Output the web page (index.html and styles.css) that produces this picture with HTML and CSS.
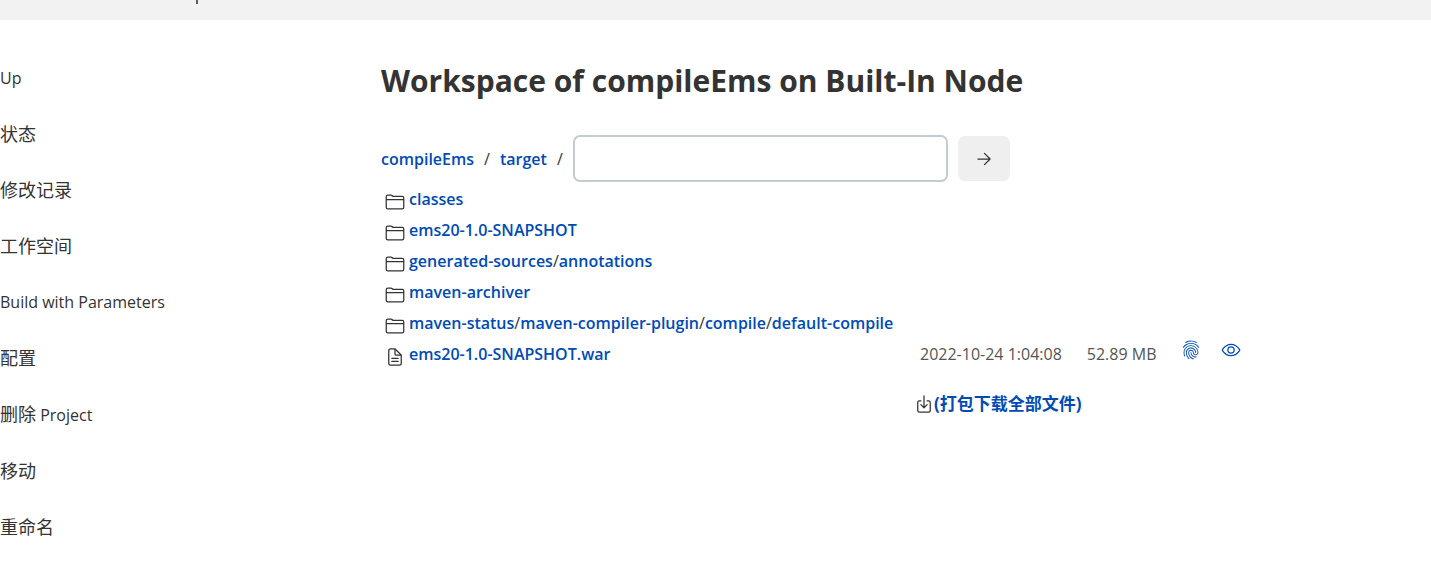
FILE: index.html
```
<!DOCTYPE html>
<html lang="zh-CN">
<head>
  <meta charset="UTF-8" />
  <title>compileEms - Workspace</title>
  <link rel="stylesheet" href="styles.css">
</head>
<body>

  <svg class="sprite" xmlns="http://www.w3.org/2000/svg">
    <symbol id="folder" viewBox="0 0 512 512">
      <path d="M440 432H72a40 40 0 01-40-40V120a40 40 0 0140-40h75.89a40 40 0 0122.19 6.72l27.84 18.56a40 40 0 0022.19 6.72H440a40 40 0 0140 40v240a40 40 0 01-40 40zM32 192h448"/>
    </symbol>
    <symbol id="document" viewBox="0 0 512 512">
      <path d="M416 221.25V416a48 48 0 01-48 48H144a48 48 0 01-48-48V96a48 48 0 0148-48h98.75a32 32 0 0122.62 9.37l141.26 141.26a32 32 0 019.37 22.62z"/>
      <path d="M256 56v120a32 32 0 0032 32h120M176 288h160M176 368h160"/>
    </symbol>
    <symbol id="arrow" viewBox="0 0 512 512">
      <path d="M268 112l144 144-144 144M392 256H100"/>
    </symbol>
    <symbol id="download" viewBox="0 0 512 512">
      <path d="M336 176h40a40 40 0 0140 40v208a40 40 0 01-40 40H136a40 40 0 01-40-40V216a40 40 0 0140-40h40"/>
      <path d="M176 272l80 80 80-80M256 48v288"/>
    </symbol>
    <symbol id="eye" viewBox="0 0 512 512">
      <path d="M255.66 112c-77.94 0-157.89 45.11-220.83 135.33a16 16 0 00-.27 17.77C82.92 340.8 161.8 400 255.66 400c92.84 0 173.34-59.38 221.79-135.25a16.14 16.14 0 000-17.47C428.89 172.28 347.8 112 255.66 112z"/>
      <circle cx="256" cy="256" r="80"/>
    </symbol>
    <symbol id="fingerprint" viewBox="0 0 512 512">
      <path fill="currentColor" stroke="none" d="M390.42 75.28a10.45 10.45 0 01-5.32-1.44C340.72 50.08 302.35 40 256.35 40c-45.77 0-89.23 11.28-128.76 33.84C122 77 115.11 74.8 111.87 69a12.4 12.4 0 014.63-16.32A281.81 281.81 0 01256.35 16c49.23 0 92.23 11.28 139.39 36.48a12 12 0 014.85 16.08 11.3 11.3 0 01-10.17 6.72zm-330.79 126a11.73 11.73 0 01-6.7-2.16 12.26 12.26 0 01-2.78-16.8c22.89-33.6 52-60 86.69-78.48 72.58-38.84 165.51-39.12 238.32-.24 34.68 18.48 63.8 44.64 86.69 78a12.29 12.29 0 01-2.78 16.8 11.26 11.26 0 01-16.18-2.88c-20.8-30.24-47.16-54-78.6-70.8-66.34-35.52-151.18-35.52-217.29.24-31.67 17-57.79 41-78.59 71.28a10.5 10.5 0 01-8.78 5.04zM204.1 491a10.66 10.66 0 01-8.09-3.6C175.9 466.48 165 453 149.55 424c-16-29.52-24.27-65.52-24.27-104.16 0-71.28 58.71-129.36 130.84-129.36S387 248.56 387 319.84a11.56 11.56 0 11-23.11 0c0-58.08-48.32-105.36-107.72-105.36S148.4 261.76 148.4 319.84c0 34.56 7.39 66.48 21.49 92.4 14.8 27.6 25 39.36 42.77 58.08a12.67 12.67 0 010 17 12.44 12.44 0 01-8.56 3.68zm165.75-44.4c-27.51 0-51.78-7.2-71.66-21.36a129.1 129.1 0 01-55-105.36 11.57 11.57 0 1123.12 0 104.28 104.28 0 0044.84 85.44c16.41 11.52 35.6 17 58.72 17a147.41 147.41 0 0024-2.4c6.24-1.2 12.25 3.12 13.4 9.84a11.92 11.92 0 01-9.47 13.92 152.28 152.28 0 01-27.95 2.88zM323.38 496a13 13 0 01-3-.48c-36.76-10.56-60.8-24.72-86-50.4-32.37-33.36-50.16-77.76-50.16-125.28 0-38.88 31.9-70.56 71.19-70.56s71.2 31.68 71.2 70.56c0 25.68 21.5 46.56 48.08 46.56s48.08-20.88 48.08-46.56c0-90.48-75.13-163.92-167.59-163.92-65.65 0-125.75 37.92-152.79 96.72-9 19.44-13.64 42.24-13.64 67.2 0 18.72 1.61 48.24 15.48 86.64 2.32 6.24-.69 13.2-6.7 15.36a11.34 11.34 0 01-14.79-7 276.39 276.39 0 01-16.88-95c0-28.8 5.32-55 15.72-77.76 30.75-67 98.94-110.4 173.6-110.4 105.18 0 190.71 84.24 190.71 187.92 0 38.88-31.9 70.56-71.2 70.56s-71.2-31.68-71.2-70.56c.01-25.68-21.49-46.6-48.07-46.6s-48.08 20.88-48.08 46.56c0 41 15.26 79.44 43.23 108.24 22 22.56 43 35 75.59 44.16 6.24 1.68 9.71 8.4 8.09 14.64a11.39 11.39 0 01-10.87 9.36z"/>
    </symbol>
  </svg>

  <header class="breadcrumb-bar"><span class="tick"></span></header>

  <div class="page">
    <nav class="tasks">
      <a href="#">Up</a>
      <a href="#" class="zh">状态</a>
      <a href="#" class="zh">修改记录</a>
      <a href="#" class="zh">工作空间</a>
      <a href="#">Build with Parameters</a>
      <a href="#" class="zh">配置</a>
      <a href="#"><span class="zh">删除</span> Project</a>
      <a href="#" class="zh">移动</a>
      <a href="#" class="zh">重命名</a>
    </nav>

    <main class="main">
      <h1>Workspace of compileEms on Built-In Node</h1>

      <form class="path-form">
        <a href="#">compileEms</a>
        <span>/</span>
        <a href="#">target</a>
        <span>/</span>
        <input type="text" class="path-input" aria-label="Path">
        <button type="button" class="go-btn" aria-label="Go"><svg class="icon"><use href="#arrow"/></svg></button>
      </form>

      <table class="files">
        <tr>
          <td class="type"><svg class="icon"><use href="#folder"/></svg></td>
          <td class="name"><a href="#">classes</a></td>
        </tr>
        <tr>
          <td class="type"><svg class="icon"><use href="#folder"/></svg></td>
          <td class="name"><a href="#">ems20-1.0-SNAPSHOT</a></td>
        </tr>
        <tr>
          <td class="type"><svg class="icon"><use href="#folder"/></svg></td>
          <td class="name"><a href="#">generated-sources</a>/<a href="#">annotations</a></td>
        </tr>
        <tr>
          <td class="type"><svg class="icon"><use href="#folder"/></svg></td>
          <td class="name"><a href="#">maven-archiver</a></td>
        </tr>
        <tr>
          <td class="type"><svg class="icon"><use href="#folder"/></svg></td>
          <td class="name"><a href="#">maven-status</a>/<a href="#">maven-compiler-plugin</a>/<a href="#">compile</a>/<a href="#">default-compile</a></td>
        </tr>
        <tr>
          <td class="type"><svg class="icon"><use href="#document"/></svg></td>
          <td class="name"><a href="#">ems20-1.0-SNAPSHOT.war</a></td>
          <td class="meta">2022-10-24 1:04:08</td>
          <td class="meta">52.89 MB</td>
          <td class="action"><a href="#" aria-label="Fingerprint"><svg class="icon"><use href="#fingerprint"/></svg></a></td>
          <td class="action"><a href="#" aria-label="View"><svg class="icon"><use href="#eye"/></svg></a></td>
        </tr>
        <tr class="zip-row">
          <td></td>
          <td></td>
          <td colspan="4"><div class="zip"><svg class="icon"><use href="#download"/></svg><a href="#">(打包下载全部文件)</a></div></td>
        </tr>
      </table>
    </main>
  </div>

</body>
</html>
```
FILE: styles.css
```
* {
  box-sizing: border-box;
}

body {
  margin: 0;
  background: white;
  color: #333;
  font-family: 'Open Sans', 'Noto Sans CJK SC', sans-serif;
  font-size: 16px;
  line-height: 24px;
}

a {
  color: #004bb5;
  font-weight: 600;
  text-decoration: none;
}

a:hover {
  text-decoration: underline;
}

.zh {
  font-size: 18px;
}

.sprite {
  display: none;
}

.icon {
  display: block;
  width: 20px;
  height: 20px;
  fill: none;
  stroke: currentColor;
  stroke-width: 32;
  stroke-linecap: round;
  stroke-linejoin: round;
}

.breadcrumb-bar {
  height: 20px;
  padding-left: 196px;
  background: #f2f2f2;
}

.tick {
  display: block;
  width: 2px;
  height: 4px;
  background: #6b5a50;
}

.page {
  display: flex;
}

.tasks {
  display: flex;
  flex-direction: column;
  flex: 0 0 381px;
  gap: 32px;
  padding-top: 46px;
}

.tasks a {
  color: #333;
  font-weight: 400;
}

.main {
  flex: 1;
  padding: 40px 40px 40px 0;
}

h1 {
  margin: 0 0 33px;
  font-size: 30px;
  line-height: 42px;
  font-weight: 700;
}

.path-form {
  display: flex;
  align-items: center;
  gap: 10px;
  margin-bottom: 1px;
}

.path-input {
  width: 375px;
  height: 47px;
  padding: 8px;
  border: 2px solid #c3ccd1;
  border-radius: 7px;
  font: inherit;
}

.go-btn {
  display: flex;
  align-items: center;
  justify-content: center;
  width: 52px;
  height: 45px;
  padding: 0;
  border: 0;
  border-radius: 7px;
  background: #efefef;
  color: #333;
  cursor: pointer;
}

.files {
  border-collapse: collapse;
}

.files td {
  height: 31px;
  padding: 0;
  white-space: nowrap;
}

.files .type {
  width: 28px;
  padding: 6px 4px 0;
}

.files .name {
  width: 511px;
}

.files .meta {
  padding-right: 25px;
  color: #555;
}

.files .action {
  width: 40px;
  padding-bottom: 7px;
}

.files .zip-row td {
  height: 69px;
}

.zip {
  display: flex;
  align-items: center;
  margin-left: -6px;
}

.zip a {
  font-size: 17px;
  font-weight: 700;
}
```
